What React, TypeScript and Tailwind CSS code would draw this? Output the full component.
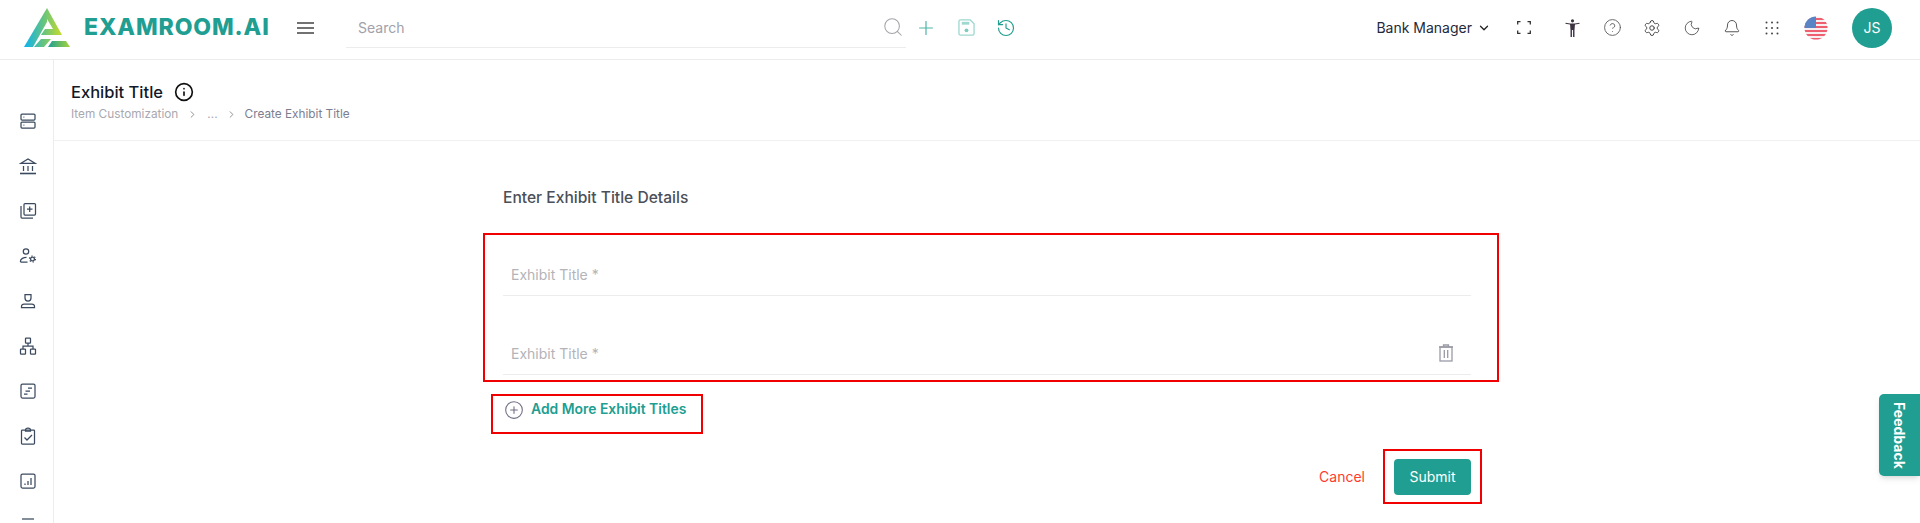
import { ChevronDown, Plus, Search, History, CirclePlus, Info, Moon, Bell, CircleHelp, Settings, ChevronRight } from 'lucide-react';

const stroke = '#3b4a5f';

function Logo() {
    return (
        <svg width="46" height="39" viewBox="0 0 46 39" className="shrink-0">
            <defs>
                <linearGradient id="logoMain" gradientUnits="userSpaceOnUse" x1="2" y1="0" x2="38" y2="0">
                    <stop offset="0" stopColor="#14b4e6" />
                    <stop offset="0.5" stopColor="#68c47c" />
                    <stop offset="1" stopColor="#c8dc2a" />
                </linearGradient>
                <linearGradient id="logoBase" gradientUnits="userSpaceOnUse" x1="24" y1="0" x2="46" y2="0">
                    <stop offset="0" stopColor="#1f9e92" />
                    <stop offset="1" stopColor="#a5d33c" />
                </linearGradient>
            </defs>
            {/* left leg */}
            <path d="M23 0 L0 39 H9 L23 14Z" fill="url(#logoMain)" />
            {/* right leg and the bowl of the R */}
            <path d="M23 0 L38 27 H17 L21 21 H29 L23 11Z" fill="url(#logoMain)" />
            <path d="M10 39 L17 31 H27 L20 39Z" fill="url(#logoMain)" />
            <path d="M28 33 H42 L46 39 H24Z" fill="url(#logoBase)" />
        </svg>
    );
}

function Flag() {
    return (
        <svg width="24" height="24" viewBox="0 0 24 24">
            <defs>
                <clipPath id="flagClip">
                    <circle cx="12" cy="12" r="11.5" />
                </clipPath>
            </defs>
            <g clipPath="url(#flagClip)">
                <rect width="24" height="24" fill="#f8f0f0" />
                <rect y="2" width="24" height="2" fill="#ee5f6f" />
                <rect y="6" width="24" height="2" fill="#ee5f6f" />
                <rect y="10" width="24" height="2" fill="#ee5f6f" />
                <rect y="14" width="24" height="2" fill="#ee5f6f" />
                <rect y="18" width="24" height="2" fill="#ee5f6f" />
                <rect y="22" width="24" height="2" fill="#ee5f6f" />
                <rect width="12" height="12" fill="#5b84c4" />
            </g>
        </svg>
    );
}

function MenuIcon() {
    return (
        <svg width="17" height="12" viewBox="0 0 17 12" stroke="#444" strokeWidth="1.6" className="shrink-0">
            <path d="M0 1h17M0 6h17M0 11h17" />
        </svg>
    );
}

function FullscreenIcon() {
    return (
        <svg width="14" height="13" viewBox="0 0 14 13" fill="none" stroke="#333" strokeWidth="1.3">
            <path d="M.7 3.500V.7h2.800M10.500 .7h2.800v2.800M13.300 9.500v2.800h-2.800M3.500 12.300H.7V9.500" />
        </svg>
    );
}

function PersonIcon() {
    return (
        <svg width="15" height="18" viewBox="0 0 15 18">
            <circle cx="7.500" cy="1.800" r="1.600" fill="#3d3340" />
            <path d="M.5 4.200 L5 5 H10 L14.500 4.200" fill="none" stroke="#3d3340" strokeWidth="1.100" />
            <path d="M5 5 H10 L9.500 11 H5.500Z" fill="#3d3340" />
            <rect x="5.500" y="11" width="1.500" height="7" fill="#4a3a55" />
            <rect x="8" y="11" width="1.500" height="7" fill="#4a3a55" />
        </svg>
    );
}

function SaveIcon() {
    return (
        <svg width="17" height="17" viewBox="0 0 18 18" fill="none" stroke="#9fd8d0" strokeWidth="1.4">
            <path d="M2.500 1h10.500l4 4v10.500a1.500 1.500 0 0 1-1.500 1.500h-13A1.500 1.500 0 0 1 1 15.500v-13A1.500 1.500 0 0 1 2.500 1z" />
            <rect x="4" y="3" width="8" height="3" fill="#9fd8d0" stroke="none" />
            <circle cx="9" cy="12" r="2" fill="#7fcabf" stroke="none" />
        </svg>
    );
}

function DotsIcon() {
    return (
        <svg width="14" height="14" viewBox="0 0 14 14" fill="#444">
            {[1.5, 7, 12.5].map((y) =>
                [1.5, 7, 12.5].map((x) => <circle key={`${x}-${y}`} cx={x} cy={y} r="1" />)
            )}
        </svg>
    );
}

function TrashIcon() {
    return (
        <svg width="16" height="18" viewBox="0 0 16 18" fill="none" stroke="#9a9aa6" strokeWidth="1.300" className="shrink-0">
            <path d="M1 3h14M5.500 3V1h5v2" />
            <rect x="2" y="3" width="12" height="14" />
            <path d="M6.300 6v8M9.700 6v8" />
        </svg>
    );
}

function SideIcon({ children }: { children: React.ReactNode }) {
    return (
        <svg width="18" height="18" viewBox="0 0 18 18" fill="none" stroke={stroke} strokeWidth="1.250" className="shrink-0">
            {children}
        </svg>
    );
}

const sideIcons = [
    <SideIcon key="server">
        <rect x="2" y="2" width="14" height="6" rx="1" />
        <rect x="2" y="10" width="14" height="6" rx="1" />
        <path d="M4.500 5h.8M4.500 13h.8" />
    </SideIcon>,
    <SideIcon key="bank">
        <path d="M2 6.300 L9 2 L16 6.300Z" />
        <path d="M4.500 9v5M9 9v5M13.500 9v5" />
        <path d="M1 16.500h16" strokeWidth="1.600" />
    </SideIcon>,
    <SideIcon key="copy">
        <rect x="5" y="1.500" width="11.500" height="11.500" rx="1" />
        <path d="M2 4v11a1 1 0 0 0 1 1h11M10.700 4.500v5.500M8 7.200h5.500" />
    </SideIcon>,
    <SideIcon key="usergear">
        <circle cx="7" cy="4.500" r="2.700" />
        <path d="M1.500 15v-1c0-2 3-3.700 6-3.700M1.500 15h7" />
        <circle cx="13.500" cy="12" r="1.900" />
        <circle cx="13.500" cy="12" r="3" strokeWidth="1.200" strokeDasharray="1.400 1.740" />
    </SideIcon>,
    <SideIcon key="user">
        <path d="M6 2.500h6v3.500a3 3 0 0 1-6 0z" />
        <path d="M2.500 15.500v-1a2.500 2.500 0 0 1 2.500-2.500h8a2.500 2.500 0 0 1 2.500 2.500v1z" />
    </SideIcon>,
    <SideIcon key="network">
        <rect x="6.500" y="1" width="5" height="5" rx=".6" />
        <rect x="1.500" y="12" width="5" height="5" rx=".6" />
        <rect x="11.500" y="12" width="5" height="5" rx=".6" />
        <path d="M9 6v3M4 12V9h10v3" />
    </SideIcon>,
    <SideIcon key="report">
        <rect x="2" y="2" width="14" height="14" rx="1.500" />
        <path d="M9 6h4M6.500 9h4.500M5 12h3.500" />
    </SideIcon>,
    <SideIcon key="clipboard">
        <rect x="2.500" y="3" width="13" height="14" rx=".8" />
        <path d="M6.500 3c0-1 1-2 2.500-2s2.500 1 2.500 2v1h-5zM5.500 10.500l2.500 2.500 5-5" />
    </SideIcon>,
    <SideIcon key="chart">
        <rect x="2" y="2" width="14" height="14" rx="1.500" />
        <path d="M6 13v-1.500M9 13V9M12 13V6" />
    </SideIcon>,
    <SideIcon key="more">
        <path d="M3 2h12" />
    </SideIcon>,
];

function TitleField({ removable }: { removable?: boolean }) {
    return (
        <div className="flex h-[52px] items-center justify-between border-b border-[#ececec] pt-[9px] pr-[17px] pl-2">
            <span className="text-[14px] text-[#b3b3b8]">Exhibit Title *</span>
            {removable && <TrashIcon />}
        </div>
    );
}

export default function App() {
    return (
        <div className="relative flex h-[523px] flex-col overflow-hidden bg-white font-['Inter',sans-serif]">
            <header className="flex h-[60px] shrink-0 items-center border-b border-[#ececec] pb-[4px] pl-6">
                <Logo />
                <span className="ml-[14px] w-[213px] shrink-0 text-[23px] leading-none font-extrabold tracking-[0.9px] text-[#209e91]">
                    EXAMROOM.AI
                </span>
                <MenuIcon />
                <div className="ml-[32px] flex h-[40px] w-[560px] shrink-0 items-center justify-between border-b border-[#ececec] pr-[2px] pl-3">
                    <span className="text-[14px] text-[#a1a1aa]">Search</span>
                    <Search size={22} color="#a3a3a8" strokeWidth={1.1} />
                </div>
                <div className="flex w-10 justify-center">
                    <Plus size={22} color="#4db3a8" strokeWidth={1.3} />
                </div>
                <div className="flex w-10 justify-center">
                    <SaveIcon />
                </div>
                <div className="flex w-10 justify-center">
                    <History size={20} color="#209e91" strokeWidth={1.4} />
                </div>
                <div className="ml-auto flex items-center">
                    <span className="text-[14px] text-[#1e293b]">Bank Manager</span>
                    <ChevronDown size={14} color="#222" strokeWidth={2.2} className="ml-[5px]" />
                    <div className="ml-[13px] flex w-10 justify-center">
                        <FullscreenIcon />
                    </div>
                    <div className="ml-[8px] flex w-10 justify-center">
                        <PersonIcon />
                    </div>
                    <div className="flex w-10 justify-center">
                        <CircleHelp size={19} color="#555" strokeWidth={1.1} />
                    </div>
                    <div className="flex w-10 justify-center">
                        <Settings size={18} color="#444" strokeWidth={1.3} />
                    </div>
                    <div className="flex w-10 justify-center">
                        <Moon size={18} color="#555" strokeWidth={1.2} />
                    </div>
                    <div className="flex w-10 justify-center">
                        <Bell size={18} color="#444" strokeWidth={1.2} />
                    </div>
                    <div className="flex w-10 justify-center">
                        <DotsIcon />
                    </div>
                    <div className="flex w-12 justify-center">
                        <Flag />
                    </div>
                    <div className="mr-[28px] ml-[12px] flex size-10 items-center justify-center rounded-full bg-[#209e91] text-[14px] text-white">
                        JS
                    </div>
                </div>
            </header>
            <div className="flex min-h-0 flex-1">
                <aside className="flex w-[54px] shrink-0 flex-col items-center gap-[27px] overflow-hidden border-r border-[#ececec] pt-[52px] pl-[2px]">
                    {sideIcons}
                </aside>
                <main className="min-w-0 flex-1">
                    <div className="h-[81px] border-b border-[#f1f1f1] pt-[21px] pl-[17px]">
                        <div className="flex items-center gap-[11px]">
                            <h1 className="text-[16.500px] leading-[22px] font-medium text-[#111827]">Exhibit Title</h1>
                            <Info size={20} color="#111" strokeWidth={2} />
                        </div>
                        <div className="mt-[2px] flex items-center text-[11.800px] leading-[18px] text-[#a8a8b0]">
                            <span>Item Customization</span>
                            <ChevronRight size={11} color="#888" className="ml-[9px]" />
                            <span className="ml-[9px]">...</span>
                            <ChevronRight size={11} color="#888" className="ml-[8px]" />
                            <span className="ml-[8px] text-[#7d7d90]">Create Exhibit Title</span>
                        </div>
                    </div>
                    <div className="ml-[429px] w-[1016px] pt-[46px]">
                        <h2 className="pl-[20px] text-[15.600px] leading-[22px] font-medium text-[#4b5058]">
                            Enter Exhibit Title Details
                        </h2>
                        <div className="mt-[24px] border-2 border-[#f00000] pr-[26px] pb-[5px] pl-[18px]">
                            <div className="h-[9px]" />
                            <TitleField />
                            <div className="h-[27px]" />
                            <TitleField removable />
                        </div>
                        <div className="mt-[12px] ml-[8px] flex h-[40px] w-[212px] items-center border-2 border-[#f00000] pb-[9px] pl-[11px]">
                            <CirclePlus size={20} color="#6f6f84" strokeWidth={1.3} />
                            <span className="ml-[7px] text-[13.900px] font-semibold text-[#209e91]">Add More Exhibit Titles</span>
                        </div>
                        <div className="mt-[15px] flex items-center justify-end pr-[17px]">
                            <span className="mr-[18px] text-[14px] text-[#ff3b30]">Cancel</span>
                            <div className="flex h-[55px] w-[99px] items-center justify-center border-2 border-[#f00000]">
                                <button className="h-[36px] w-[77px] rounded-[4px] bg-[#209e91] text-[14px] text-white">
                                    Submit
                                </button>
                            </div>
                        </div>
                    </div>
                </main>
            </div>
            <div className="absolute top-[394px] right-0 flex h-[82px] w-[41px] items-center justify-center rounded-l-[5px] bg-[#209e91] shadow-md">
                <span className="text-[14px] font-bold text-white [writing-mode:vertical-rl]">Feedback</span>
            </div>
        </div>
    );
}
